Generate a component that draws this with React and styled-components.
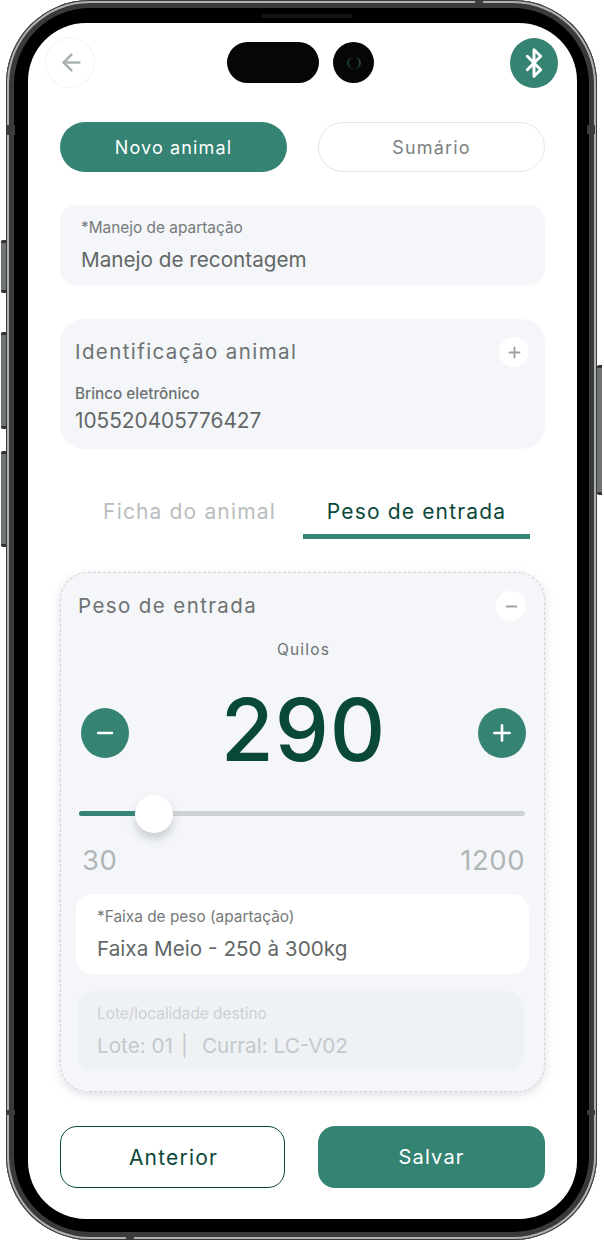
import React from "react";
import styled, { createGlobalStyle } from "styled-components";
import { ArrowLeft, Bluetooth, Minus, Plus } from "lucide-react";

const GREEN = "#348373";
const DARK = "#0a483a";

const GlobalStyle = createGlobalStyle`
  html, body {
    margin: 0;
    padding: 0;
    background: #fff;
    font-family: "Inter", "Liberation Sans", sans-serif;
  }
`;

const Page = styled.div`
  width: 604px;
  height: 1242px;
  padding: 0 7px 2px 6px;
  box-sizing: border-box;
`;

const Phone = styled.div`
  position: relative;
  height: 1240px;
  box-sizing: border-box;
  padding: 23px 20px 21px 22px;
  border-radius: 84px;
  background: #000;
  box-shadow: inset 0 0 0 1px #3a3a38, inset 0 0 0 3px #aeb2b0, inset 0 0 0 8px #3a3a38;
`;

const SideButton = styled.div`
  position: absolute;
  left: ${props => (props.right ? "auto" : "-5px")};
  right: ${props => (props.right ? "-5px" : "auto")};
  top: ${props => props.top}px;
  width: 5px;
  height: ${props => props.height}px;
  background: #6f7472;
  border-radius: 2px 0 0 2px;
  border-top: 3px solid #333;
  border-bottom: 3px solid #333;
  box-sizing: border-box;
`;

const AntennaBand = styled.div`
  position: absolute;
  background: #3c3c3a;
  left: ${props => props.left}px;
  top: ${props => props.top}px;
  width: ${props => props.width}px;
  height: ${props => props.height}px;
`;

const Speaker = styled.div`
  position: absolute;
  top: 14px;
  left: 255px;
  width: 92px;
  height: 4px;
  border-radius: 2px;
  background: #141414;
`;

const Screen = styled.div`
  height: 100%;
  background: #fff;
  border-radius: 58px;
  overflow: hidden;
  padding: 14px 32px 0;
  box-sizing: border-box;
`;

const Header = styled.div`
  display: flex;
  align-items: center;
  height: 51px;
  margin: 0 -13px 0 -15px;
`;

const BackButton = styled.div`
  width: 50px;
  height: 51px;
  box-sizing: border-box;
  padding-left: 2px;
  border-radius: 50%;
  border: 1px solid #f1f3f6;
  display: flex;
  align-items: center;
  justify-content: center;
  color: #a9b4b2;
`;

const Island = styled.div`
  display: flex;
  gap: 14px;
  margin-left: 132px;
`;

const Pill = styled.div`
  width: 92px;
  height: 41px;
  background: #060606;
  border-radius: 21px;
`;

const Camera = styled.div`
  width: 41px;
  height: 41px;
  background: #060606;
  border-radius: 50%;
  display: flex;
  align-items: center;
  justify-content: center;
  &::after {
    content: "";
    width: 10px;
    height: 12px;
    border-radius: 50%;
    border-left: 2px solid #1d3f38;
    border-right: 2px solid #24473f;
  }
`;

const BluetoothBadge = styled.div`
  width: 48px;
  height: 50px;
  margin-left: auto;
  border-radius: 50%;
  background: ${GREEN};
  color: #fff;
  display: flex;
  align-items: center;
  justify-content: center;
`;

const TopTabs = styled.div`
  display: flex;
  justify-content: space-between;
  margin-top: 34px;
`;

const TopTab = styled.div`
  width: 227px;
  height: 50px;
  box-sizing: border-box;
  border-radius: 25px;
  display: flex;
  align-items: center;
  justify-content: center;
  font-size: 18px;
  letter-spacing: 1.15px;
  background: ${props => (props.active ? GREEN : "#fff")};
  color: ${props => (props.active ? "#fff" : "#7b8180")};
  border: ${props => (props.active ? "none" : "1px solid #e3e5e8")};
`;

const Field = styled.div`
  margin-top: ${props => props.top || 0}px;
  margin-left: ${props => props.inset || 0}px;
  margin-right: ${props => (props.inset ? 5 : 0)}px;
  height: 80px;
  box-sizing: border-box;
  padding: 13px 21px 0 ${props => (props.inset ? 20 : 21)}px;
  border-radius: 16px;
  background: ${props => props.bg || "#f4f6fa"};
`;

const FieldLabel = styled.div`
  font-size: 15.4px;
  line-height: 19px;
  color: ${props => (props.muted ? "#ccd0d3" : "#757a79")};
`;

const FieldValue = styled.div`
  margin-top: 10px;
  font-size: 20.7px;
  line-height: 26px;
  color: ${props => (props.muted ? "#c4c8cb" : "#636867")};
`;

const Separator = styled.span`
  margin: 0 14px 0 8px;
`;

const IdCard = styled.div`
  margin-top: 34px;
  height: 130px;
  box-sizing: border-box;
  padding: 18px 16px 0 15px;
  border-radius: 24px;
  background: #f4f6fa;
`;

const TitleRow = styled.div`
  display: flex;
  align-items: center;
  justify-content: space-between;
`;

const CardTitleRow = styled(TitleRow)`
  padding: 0 3px 0 2px;
`;

const SectionTitle = styled.div`
  font-size: 20.5px;
  line-height: 28px;
  letter-spacing: 1.4px;
  color: #6d7271;
`;

const RoundIcon = styled.div`
  width: 30px;
  height: 30px;
  border-radius: 50%;
  background: #fff;
  color: #9ea3a4;
  display: flex;
  align-items: center;
  justify-content: center;
`;

const EarTagLabel = styled.div`
  margin-top: 17px;
  font-size: 15.3px;
  line-height: 19px;
  font-weight: 500;
  color: #6d7271;
`;

const EarTagValue = styled.div`
  margin-top: 5px;
  font-size: 20.8px;
  line-height: 26px;
  color: #636867;
`;

const SubTabs = styled.div`
  display: flex;
  margin: 34px 15px 0 15px;
  height: 56px;
  justify-content: flex-end;
`;

const SubTab = styled.div`
  width: 227px;
  height: 56px;
  box-sizing: border-box;
  padding-top: 15px;
  text-align: center;
  font-size: 21px;
  line-height: 28px;
  letter-spacing: 1.15px;
  color: ${props => (props.active ? DARK : "#b9bdbe")};
  border-bottom: ${props => (props.active ? `5px solid ${GREEN}` : "none")};
`;

const WeightCard = styled.div`
  margin-top: 33px;
  height: 520px;
  box-sizing: border-box;
  padding: 18px 15px 0 15px;
  border-radius: 28px;
  background: #f4f6fa;
  border: 1px dashed #cfd3d8;
  box-shadow: 0 3px 10px rgba(150, 160, 170, 0.32);
`;

const Unit = styled.div`
  margin: 19px 0 0 2px;
  text-align: center;
  font-size: 15.5px;
  line-height: 19px;
  letter-spacing: 1.2px;
  color: #6d7271;
`;

const Stepper = styled.div`
  display: flex;
  align-items: center;
  justify-content: space-between;
  margin: 28px 3px 0 5px;
  height: 92px;
`;

const StepButton = styled.div`
  width: 48px;
  height: 50px;
  border-radius: 50%;
  background: ${GREEN};
  color: #fff;
  display: flex;
  align-items: center;
  justify-content: center;
`;

const WeightValue = styled.div`
  margin-top: -6px;
  font-size: 86px;
  line-height: 92px;
  letter-spacing: 1px;
  font-weight: 500;
  color: ${DARK};
`;

const Track = styled.div`
  position: relative;
  margin: 32px 4px 0 3px;
  height: 5px;
  border-radius: 3px;
  background: #cfd2d5;
`;

const TrackFill = styled.div`
  height: 100%;
  border-radius: 3px;
  background: ${GREEN};
`;

const Thumb = styled.div`
  position: absolute;
  top: -16px;
  width: 38px;
  height: 38px;
  border-radius: 50%;
  background: #fff;
  box-shadow: 0 6px 8px rgba(140, 145, 150, 0.4);
`;

const RangeLabels = styled.div`
  display: flex;
  justify-content: space-between;
  margin: 28px 4px 0 6px;
  font-size: 27.5px;
  line-height: 32px;
  letter-spacing: 0.5px;
  color: #b0b6b6;
`;

const Footer = styled.div`
  display: flex;
  justify-content: space-between;
  margin-top: 34px;
`;

const FooterButton = styled.div`
  width: ${props => (props.primary ? 227 : 225)}px;
  height: 62px;
  box-sizing: border-box;
  padding-left: ${props => (props.primary ? 0 : 2)}px;
  border-radius: 17px;
  display: flex;
  align-items: center;
  justify-content: center;
  font-size: ${props => (props.primary ? 20 : 21)}px;
  letter-spacing: 1.2px;
  background: ${props => (props.primary ? GREEN : "#fff")};
  color: ${props => (props.primary ? "#fff" : DARK)};
  border: ${props => (props.primary ? "none" : `1px solid ${DARK}`)};
`;

export default function App() {
  return (
    <Page>
      <GlobalStyle />
      <Phone>
        <SideButton top={240} height={53} />
        <SideButton top={332} height={97} />
        <SideButton top={451} height={96} />
        <SideButton right top={365} height={130} />
        <AntennaBand left={1} top={125} width={8} height={10} />
        <AntennaBand left={1} top={1110} width={8} height={5} />
        <AntennaBand left={120} top={1232} width={8} height={8} />
        <AntennaBand left={469} top={0} width={8} height={7} />
        <AntennaBand left={581} top={125} width={8} height={9} />
        <AntennaBand left={581} top={1110} width={8} height={5} />
        <Speaker />
        <Screen>
          <Header>
            <BackButton>
              <ArrowLeft size={27} strokeWidth={2.2} />
            </BackButton>
            <Island>
              <Pill />
              <Camera />
            </Island>
            <BluetoothBadge>
              <Bluetooth size={32} strokeWidth={2.2} />
            </BluetoothBadge>
          </Header>
          <TopTabs>
            <TopTab active>Novo animal</TopTab>
            <TopTab>Sumário</TopTab>
          </TopTabs>
          <Field top={33}>
            <FieldLabel>*Manejo de apartação</FieldLabel>
            <FieldValue>Manejo de recontagem</FieldValue>
          </Field>
          <IdCard>
            <TitleRow>
              <SectionTitle>Identificação animal</SectionTitle>
              <RoundIcon>
                <Plus size={17} strokeWidth={2.6} />
              </RoundIcon>
            </TitleRow>
            <EarTagLabel>Brinco eletrônico</EarTagLabel>
            <EarTagValue>105520405776427</EarTagValue>
          </IdCard>
          <SubTabs>
            <SubTab>Ficha do animal</SubTab>
            <SubTab active>Peso de entrada</SubTab>
          </SubTabs>
          <WeightCard>
            <CardTitleRow>
              <SectionTitle>Peso de entrada</SectionTitle>
              <RoundIcon>
                <Minus size={17} strokeWidth={2.6} />
              </RoundIcon>
            </CardTitleRow>
            <Unit>Quilos</Unit>
            <Stepper>
              <StepButton>
                <Minus size={24} strokeWidth={2.4} />
              </StepButton>
              <WeightValue>290</WeightValue>
              <StepButton>
                <Plus size={26} strokeWidth={2.4} />
              </StepButton>
            </Stepper>
            <Track>
              <TrackFill style={{ width: "14%" }} />
              <Thumb style={{ left: "12.5%" }} />
            </Track>
            <RangeLabels>
              <span>30</span>
              <span>1200</span>
            </RangeLabels>
            <Field top={18} bg="#fff">
              <FieldLabel>*Faixa de peso (apartação)</FieldLabel>
              <FieldValue>Faixa Meio - 250 à 300kg</FieldValue>
            </Field>
            <Field top={17} inset={1} bg="#eff2f5">
              <FieldLabel muted>Lote/localidade destino</FieldLabel>
              <FieldValue muted>
                Lote: 01<Separator>|</Separator>Curral: LC-V02
              </FieldValue>
            </Field>
          </WeightCard>
          <Footer>
            <FooterButton>Anterior</FooterButton>
            <FooterButton primary>Salvar</FooterButton>
          </Footer>
        </Screen>
      </Phone>
    </Page>
  );
}
